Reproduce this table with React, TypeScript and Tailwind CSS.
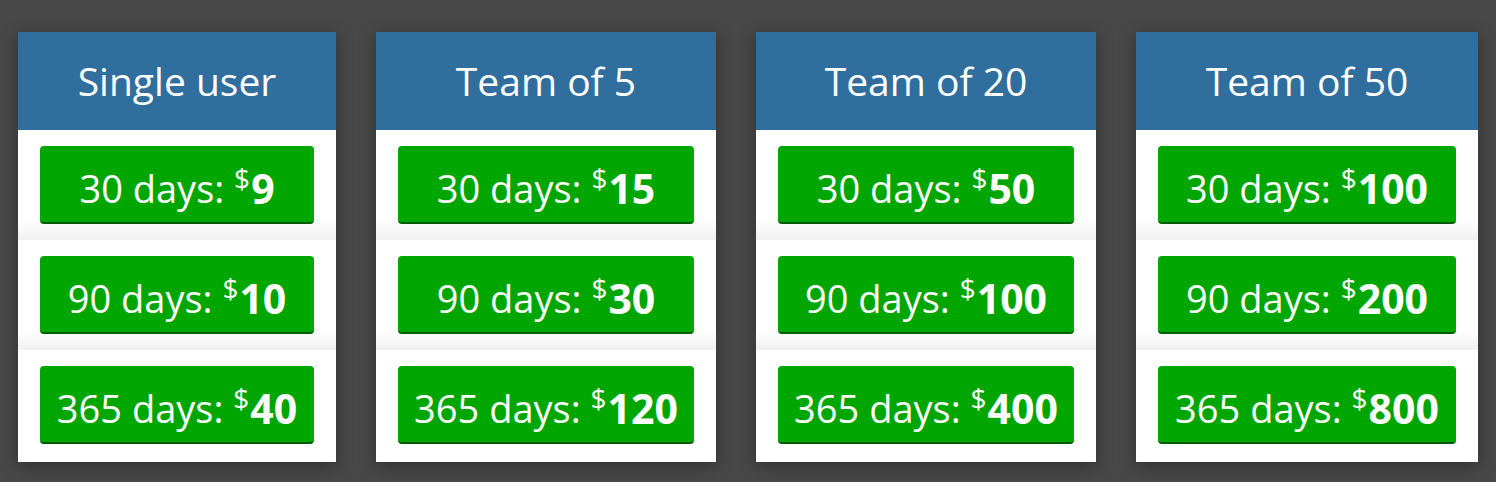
const plans = [
  { name: "Single user", width: "w-[318px]", prices: ["9", "10", "40"] },
  { name: "Team of 5", width: "w-[340px]", prices: ["15", "30", "120"] },
  { name: "Team of 20", width: "w-[340px]", prices: ["50", "100", "400"] },
  { name: "Team of 50", width: "w-[342px]", prices: ["100", "200", "800"] },
];

const periods = ["30 days", "90 days", "365 days"];

function PriceButton({ period, price }: { period: string; price: string }) {
  return (
    <button className="w-full h-[78px] rounded-[4px] bg-[#00a600] border-b-2 border-[#005a00] text-white flex items-center justify-center pt-[8px] leading-none">
      <span className="text-[38px]">{period}:&nbsp;</span>
      <span className="text-[28px] self-start mt-[10px] mr-[1px]">$</span>
      <span className="text-[41px] font-bold">{price}</span>
    </button>
  );
}

function PlanCard({ plan }: { plan: (typeof plans)[number] }) {
  return (
    <div className={`${plan.width} bg-white shadow-[0_4px_16px_rgba(0,0,0,0.35)] pb-[2px]`}>
      <div className="h-[98px] bg-[#306e9e] flex items-center justify-center text-white text-[39px]">
        {plan.name}
      </div>
      {plan.prices.map((price, i) => (
        <div
          key={i}
          className={`h-[110px] px-[22px] pt-[16px] ${
            i < 2 ? "bg-gradient-to-b from-white from-[82%] to-[#f0f0f0]" : ""
          }`}
        >
          <PriceButton period={periods[i]} price={price} />
        </div>
      ))}
    </div>
  );
}

export default function App() {
  return (
    <main
      className="w-[1496px] h-[482px] bg-[#484848] flex items-start gap-[40px] px-[18px] pt-[32px]"
      style={{ fontFamily: '"Open Sans", "Noto Sans", sans-serif' }}
    >
      {plans.map((plan) => (
        <PlanCard key={plan.name} plan={plan} />
      ))}
    </main>
  );
}
